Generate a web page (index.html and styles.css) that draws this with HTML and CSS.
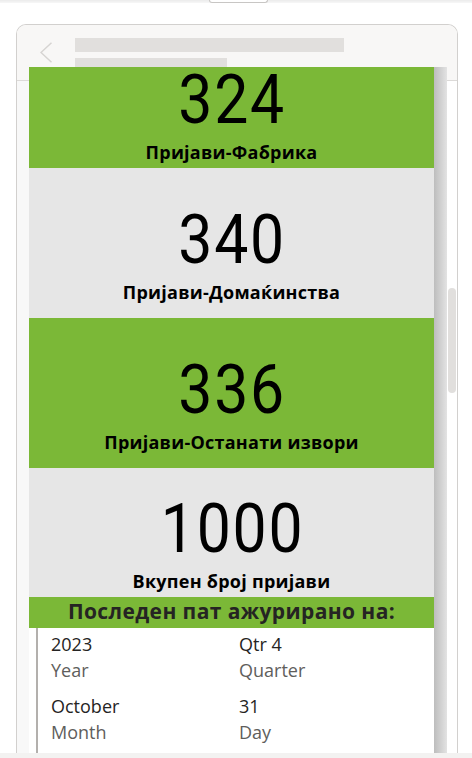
FILE: index.html
```
<!DOCTYPE html>
<html lang="mk">
<head>
<meta charset="utf-8">
<link rel="stylesheet" href="styles.css">
</head>
<body>
<div class="top"><div class="tab"></div></div>
<div class="frame">
  <div class="hdr">
    <svg class="back" width="12" height="21" viewBox="0 0 12 21"><polyline points="11.5,0.8 1,10.5 11.5,20.2" fill="none" stroke="#d6d4d2" stroke-width="1.5"/></svg>
    <div class="bars"><div class="bar b1"></div><div class="bar b2"></div></div>
  </div>
  <div class="main">
    <div class="gutter"></div>
    <div class="report">
      <div class="scroll">
        <div class="card green c1"><div class="num">324</div><div class="lbl">Пријави-Фабрика</div></div>
        <div class="card gray c2"><div class="num">340</div><div class="lbl">Пријави-Домаќинства</div></div>
        <div class="card green c3"><div class="num">336</div><div class="lbl">Пријави-Останати извори</div></div>
        <div class="card gray c4"><div class="num">1000</div><div class="lbl">Вкупен број пријави</div></div>
        <div class="banner">Последен пат ажурирано на:</div>
        <div class="table">
          <div class="grid">
            <div class="cell"><div class="v">2023</div><div class="k">Year</div></div>
            <div class="cell"><div class="v">Qtr 4</div><div class="k">Quarter</div></div>
            <div class="cell"><div class="v">October</div><div class="k">Month</div></div>
            <div class="cell"><div class="v">31</div><div class="k">Day</div></div>
          </div>
        </div>
      </div>
    </div>
    <div class="rail"><div class="thumb"></div></div>
  </div>
</div>
<div class="bottom"></div>
</body>
</html>
```
FILE: styles.css
```
html, body { margin: 0; padding: 0; }
body {
  width: 472px;
  height: 758px;
  overflow: hidden;
  background: #fff;
  font-family: "Open Sans", "Noto Sans", sans-serif;
}
.top {
  height: 3px;
  background: linear-gradient(#ebebeb, #f7f7f7);
  padding-left: 209px;
  display: flex;
}
.tab {
  width: 57px;
  height: 2px;
  background: #fff;
  border: 1px solid #c8c6c4;
  border-top: 0;
  border-radius: 0 0 4px 4px;
}
.frame {
  margin: 21px 0 0 16px;
  width: 440px;
  height: 728px;
  border: 1px solid #d2d0ce;
  border-bottom: 0;
  border-radius: 10px 10px 0 0;
  display: flex;
  flex-direction: column;
  overflow: hidden;
  background: #fff;
}
.hdr {
  height: 56px;
  box-sizing: border-box;
  border-bottom: 1px solid #dcdad8;
  background: #f8f7f6;
  display: flex;
  align-items: flex-start;
  padding: 13px 0 0 23px;
  flex: none;
}
.back { margin-top: 4px; margin-right: 23px; flex: none; }
.bars { display: flex; flex-direction: column; gap: 6px; }
.bar { height: 14px; background: #e1dfdd; }
.b1 { width: 269px; }
.b2 { width: 152px; }
.main { flex: 1; display: flex; min-height: 0; }
.gutter { width: 12px; background: #f8f8f8; flex: none; }
.report {
  width: 418px;
  flex: none;
  margin-top: -14px;
  overflow: hidden;
  background: linear-gradient(to right, #fff 405px, #bdbdbd 405px, #e3e3e3 418px);
}
.scroll { margin-top: -29px; width: 405px; }
.card {
  display: flex;
  flex-direction: column;
  align-items: center;
  justify-content: center;
  padding-top: 23px;
  box-sizing: border-box;
}
.c1 { height: 130px; }
.c2, .c3 { height: 150px; }
.c4 { height: 129px; }
.green { background: #7bb837; }
.gray { background: #e6e6e6; }
.num {
  font-family: Roboto, sans-serif;
  font-weight: 400;
  font-size: 69px;
  line-height: 69px;
  letter-spacing: 2px;
  margin-right: -2px;
  margin-top: -2px;
  transform: scaleX(0.88);
  color: #000;
}
.lbl {
  font-weight: 700;
  font-size: 18px;
  line-height: 22px;
  letter-spacing: 0.25px;
  margin-top: 7px;
  color: #000;
  white-space: nowrap;
}
.banner {
  height: 31px;
  box-sizing: border-box;
  background: #7bb837;
  font-weight: 700;
  font-size: 21px;
  line-height: 29px;
  letter-spacing: 0.4px;
  color: #252423;
  text-align: center;
  white-space: nowrap;
}
.table { background: #fff; min-height: 200px; display: flex; }
.grid {
  margin-left: 7px;
  border-left: 2px solid #b3b0ad;
  padding: 3px 0 0 13px;
  display: grid;
  grid-template-columns: 188px 1fr;
  row-gap: 10px;
  align-content: start;
  flex: 1;
}
.v, .k { font-size: 18px; line-height: 26px; }
.v { color: #252423; }
.k { color: #605e5c; }
.rail { width: 10px; flex: none; }
.thumb {
  margin: 207px 0 0 1px;
  width: 8px;
  height: 105px;
  border-radius: 4px;
  background: #e1dfdd;
}
.bottom { height: 5px; background: #f3f2f1; }
```
